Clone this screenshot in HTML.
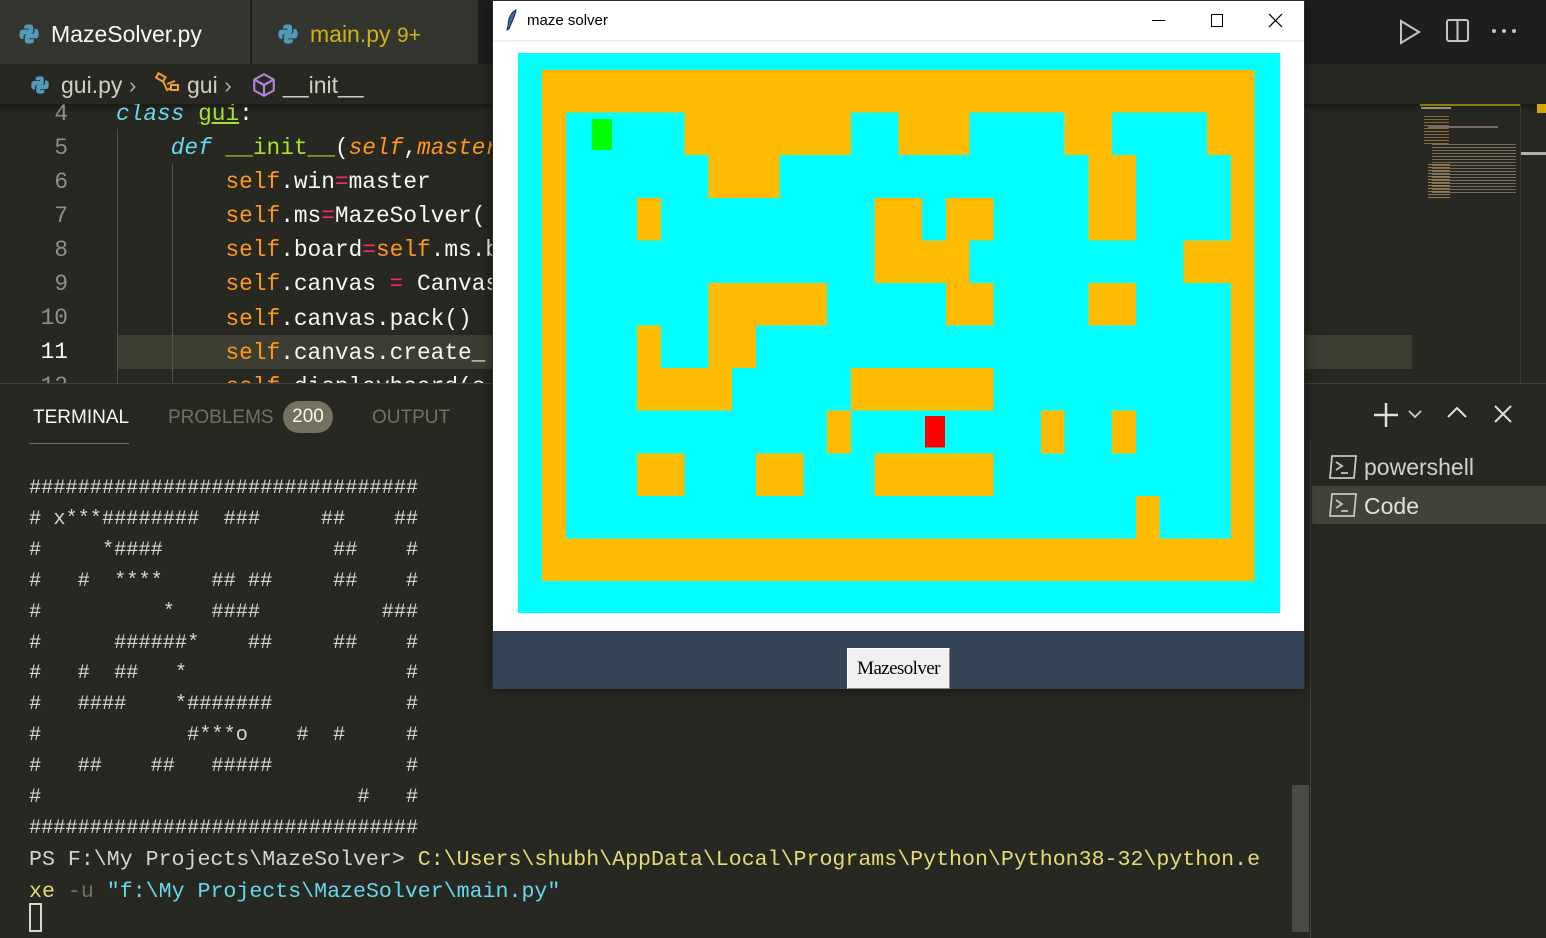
<!DOCTYPE html>
<html><head><meta charset="utf-8">
<style>
*{margin:0;padding:0;box-sizing:border-box}
body{width:1546px;height:938px;overflow:hidden;background:#272822;position:relative;font-family:"Liberation Sans",sans-serif}
.abs{position:absolute}
.mono{font-family:"Liberation Mono",monospace}
.code{position:absolute;left:116px;font-size:22.8px;line-height:34.1px;white-space:pre;color:#f8f8f2}
.ln{position:absolute;width:68px;text-align:right;font-size:22.8px;line-height:34px;color:#90908a}
.k{color:#66d9ef;font-style:italic}.g{color:#a6e22e}.o{color:#fd971f}.oi{color:#fd971f;font-style:italic}.p{color:#f92672}
.term{position:absolute;left:29px;top:474px;font-size:20.27px;line-height:30.9px;white-space:pre;color:#d6d6d0}
.ps{font-size:21.6px;line-height:30.9px}
</style></head><body>
<!-- tab bar -->
<div class="abs" style="left:0;top:0;width:1546px;height:64px;background:#1e1f1c"></div>
<div class="abs" style="left:0;top:0;width:250px;height:64px;background:#34352f"></div>
<div class="abs" style="left:252px;top:0;width:226px;height:64px;background:#34352f"></div>
<svg class="abs" style="left:18px;top:23px" width="22" height="22" viewBox="0 0 16 16"><path d="M7.9 1C4.3 1 4.5 2.6 4.5 2.6v1.6h3.5v.6H3.1S1 4.6 1 8.2s1.9 3.4 1.9 3.4H4V9.9s0-1.9 1.9-1.9h3.3s1.8 0 1.8-1.8V3S11.3 1 7.9 1z" fill="#519aba"/><path d="M8.1 15c3.6 0 3.4-1.6 3.4-1.6v-1.6H8v-.6h4.9S15 11.4 15 7.8s-1.9-3.4-1.9-3.4H12v1.7s0 1.9-1.9 1.9H6.8S5 8 5 9.8V13s-.3 2 3.1 2z" fill="#519aba"/></svg>
<div class="abs" style="left:51px;top:21px;font-size:23px;color:#f8f8f2">MazeSolver.py</div>
<svg class="abs" style="left:277px;top:23px" width="22" height="22" viewBox="0 0 16 16"><path d="M7.9 1C4.3 1 4.5 2.6 4.5 2.6v1.6h3.5v.6H3.1S1 4.6 1 8.2s1.9 3.4 1.9 3.4H4V9.9s0-1.9 1.9-1.9h3.3s1.8 0 1.8-1.8V3S11.3 1 7.9 1z" fill="#519aba"/><path d="M8.1 15c3.6 0 3.4-1.6 3.4-1.6v-1.6H8v-.6h4.9S15 11.4 15 7.8s-1.9-3.4-1.9-3.4H12v1.7s0 1.9-1.9 1.9H6.8S5 8 5 9.8V13s-.3 2 3.1 2z" fill="#519aba"/></svg>
<div class="abs" style="left:310px;top:21px;font-size:23px;color:#cfb01f">main.py <span style="font-size:21px">9+</span></div>
<!-- top right icons -->
<svg class="abs" style="left:1398px;top:19px" width="24" height="26"><path d="M3 2 L21 13 L3 24 Z" fill="none" stroke="#c5c5c5" stroke-width="2"/></svg>
<svg class="abs" style="left:1445px;top:18px" width="26" height="26"><rect x="2" y="2" width="21" height="21" rx="2" fill="none" stroke="#c5c5c5" stroke-width="2"/><line x1="12.5" y1="2" x2="12.5" y2="23" stroke="#c5c5c5" stroke-width="2"/></svg>
<svg class="abs" style="left:1490px;top:27px" width="28" height="8"><circle cx="4" cy="4" r="2" fill="#c5c5c5"/><circle cx="14" cy="4" r="2" fill="#c5c5c5"/><circle cx="24" cy="4" r="2" fill="#c5c5c5"/></svg>
<!-- breadcrumb -->
<div class="abs" style="left:0;top:64px;width:1546px;height:40px;background:#272822"></div>
<svg class="abs" style="left:30px;top:75px" width="20" height="20" viewBox="0 0 16 16"><path d="M7.9 1C4.3 1 4.5 2.6 4.5 2.6v1.6h3.5v.6H3.1S1 4.6 1 8.2s1.9 3.4 1.9 3.4H4V9.9s0-1.9 1.9-1.9h3.3s1.8 0 1.8-1.8V3S11.3 1 7.9 1z" fill="#519aba"/><path d="M8.1 15c3.6 0 3.4-1.6 3.4-1.6v-1.6H8v-.6h4.9S15 11.4 15 7.8s-1.9-3.4-1.9-3.4H12v1.7s0 1.9-1.9 1.9H6.8S5 8 5 9.8V13s-.3 2 3.1 2z" fill="#519aba"/></svg>
<div class="abs" style="left:61px;top:72px;font-size:23px;color:#cfcfc2;white-space:pre">gui.py <span style="color:#aaa">›</span></div>
<svg class="abs" style="left:155px;top:72px" width="28" height="26"><g fill="none" stroke="#ee9d28" stroke-width="2"><rect x="2" y="3" width="8" height="5" transform="rotate(30 6 5)"/><rect x="16" y="13" width="7" height="5"/><path d="M8 9 L12 18 L16 16"/><path d="M12 12 L20 9"/></g></svg>
<div class="abs" style="left:187px;top:72px;font-size:23px;color:#cfcfc2;white-space:pre">gui <span style="color:#aaa">›</span></div>
<svg class="abs" style="left:251px;top:72px" width="26" height="26" viewBox="0 0 24 24"><path d="M12 2 L21 7 L21 17 L12 22 L3 17 L3 7 Z M3 7 L12 12 L21 7 M12 12 L12 22" fill="none" stroke="#b180d7" stroke-width="2" stroke-linejoin="round"/></svg>
<div class="abs" style="left:283px;top:72px;font-size:23px;color:#cfcfc2">__init__</div>
<!-- editor -->
<div class="abs" style="left:0;top:104px;width:1546px;height:279px;overflow:hidden">
 <div class="abs" style="left:0;top:0;width:1546px;height:8px;background:linear-gradient(#1a1a17,rgba(39,40,34,0))"></div>
 <div class="abs" style="left:117px;top:231px;width:1295px;height:34px;background:#3e3d32"></div>
 <div class="abs" style="left:117px;top:25px;width:1px;height:260px;background:#525349"></div>
 <div class="abs" style="left:172px;top:60px;width:1px;height:230px;background:#525349"></div>
 <div class="ln mono" style="top:-7px">4</div>
 <div class="ln mono" style="top:27px">5</div>
 <div class="ln mono" style="top:61px">6</div>
 <div class="ln mono" style="top:95px">7</div>
 <div class="ln mono" style="top:129px">8</div>
 <div class="ln mono" style="top:163px">9</div>
 <div class="ln mono" style="top:197px">10</div>
 <div class="ln mono" style="top:231px;color:#f8f8f2">11</div>
 <div class="ln mono" style="top:265px">12</div>
 <div class="code mono" style="top:-7px"><span class="k">class</span> <span class="g" style="text-decoration:underline">gui</span>:
    <span class="k">def</span> <span class="g">__init__</span>(<span class="oi">self</span>,<span class="oi">master</span>):
        <span class="o">self</span>.win<span class="p">=</span>master
        <span class="o">self</span>.ms<span class="p">=</span>MazeSolver(
        <span class="o">self</span>.board<span class="p">=</span><span class="o">self</span>.ms.board
        <span class="o">self</span>.canvas <span class="p">=</span> Canvas(
        <span class="o">self</span>.canvas.pack()
        <span class="o">self</span>.canvas.create_
        <span class="o">self</span>.displayboard(s</div>
 <!-- minimap -->
 <div class="abs" style="left:1420px;top:0;width:100px;height:2px;background:#8a7a10"></div>
 <div class="abs" style="left:1421px;top:3px;width:30px;height:2px;background:#a09070"></div>
 <div class="abs" style="left:1424px;top:12px;width:25px;height:30px;background:repeating-linear-gradient(#8a6a3a 0 1px,transparent 1px 3px)"></div>
 <div class="abs" style="left:1428px;top:22px;width:70px;height:2px;background:#7a6a6a"></div>
 <div class="abs" style="left:1432px;top:40px;width:84px;height:50px;background:repeating-linear-gradient(#7a6a5a 0 1px,transparent 1px 3px)"></div>
 <div class="abs" style="left:1428px;top:60px;width:22px;height:34px;background:repeating-linear-gradient(#9a7a4a 0 1px,transparent 1px 3px)"></div>
 <div class="abs" style="left:1520px;top:0;width:1px;height:279px;background:#3a3b35"></div>
 <div class="abs" style="left:1537px;top:0;width:9px;height:9px;background:#d4aa00"></div>
 <div class="abs" style="left:1521px;top:48px;width:25px;height:3px;background:#b0b0b0"></div>
</div>
<!-- panel -->
<div class="abs" style="left:0;top:383px;width:1546px;height:1px;background:#414339"></div>
<div class="abs" style="left:33px;top:407px;font-size:19px;color:#f8f8f2">TERMINAL</div>
<div class="abs" style="left:29px;top:443px;width:100px;height:1px;background:#75715e"></div>
<div class="abs" style="left:168px;top:407px;font-size:19px;color:#75715e">PROBLEMS</div>
<div class="abs" style="left:283px;top:401px;width:50px;height:32px;border-radius:16px;background:#75715e;color:#f8f8f2;font-size:19px;text-align:center;line-height:32px">200</div>
<div class="abs" style="left:372px;top:407px;font-size:19px;color:#75715e">OUTPUT</div>
<div class="term mono">################################
# x***########  ###     ##    ##
#     *####              ##    #
#   #  ****    ## ##     ##    #
#          *   ####          ###
#      ######*    ##     ##    #
#   #  ##   *                  #
#   ####    *#######           #
#            #***o    #  #     #
#   ##    ##   #####           #
#                          #   #
################################
<span class="ps">PS F:\My Projects\MazeSolver&gt; <span style="color:#e6db74">C:\Users\shubh\AppData\Local\Programs\Python\Python38-32\python.e</span></span>
<span class="ps"><span style="color:#e6db74">xe</span> <span style="color:#75715e">-u</span> <span style="color:#66d9ef">"f:\My Projects\MazeSolver\main.py"</span></span></div>
<div class="abs" style="left:29px;top:903px;width:13px;height:29px;border:2px solid #d6d6d0"></div>
<div class="abs" style="left:1292px;top:785px;width:17px;height:147px;background:#4a4a45"></div>
<!-- right terminal list -->
<div class="abs" style="left:1310px;top:440px;width:1px;height:498px;background:#414339"></div>
<svg class="abs" style="left:1372px;top:401px" width="28" height="28"><path d="M14 2V26M2 14H26" stroke="#e0e0e0" stroke-width="2.5"/></svg>
<svg class="abs" style="left:1407px;top:408px" width="16" height="12"><path d="M2 3L8 9L14 3" fill="none" stroke="#ccc" stroke-width="1.8"/></svg>
<svg class="abs" style="left:1446px;top:405px" width="22" height="14"><path d="M2 12L11 3L20 12" fill="none" stroke="#ddd" stroke-width="2"/></svg>
<svg class="abs" style="left:1493px;top:404px" width="20" height="20"><path d="M2 2L18 18M18 2L2 18" stroke="#ddd" stroke-width="2"/></svg>
<div class="abs" style="left:1312px;top:486px;width:234px;height:38px;background:#414339"></div>
<svg class="abs" style="left:1328px;top:454px" width="30" height="26"><path d="M4 2H28L26 24H2Z" fill="none" stroke="#c5c5c5" stroke-width="1.8"/><path d="M8 8L14 12L8 16M13 19H20" fill="none" stroke="#c5c5c5" stroke-width="1.8"/></svg>
<div class="abs" style="left:1364px;top:454px;font-size:23px;color:#d0d0d0">powershell</div>
<svg class="abs" style="left:1328px;top:492px" width="30" height="26"><path d="M4 2H28L26 24H2Z" fill="none" stroke="#c5c5c5" stroke-width="1.8"/><path d="M8 8L14 12L8 16M13 19H20" fill="none" stroke="#c5c5c5" stroke-width="1.8"/></svg>
<div class="abs" style="left:1364px;top:493px;font-size:23px;color:#e0e0e0">Code</div>
<!-- Tk window -->
<div class="abs" style="left:492px;top:0;width:813px;height:689px;background:#fff;border:1px solid #2b2b2b;box-shadow:0 0 12px rgba(0,0,0,.5)">
 <svg class="abs" style="left:12px;top:8px" width="14" height="22"><path d="M11 1C6 3 3 10 3 17L2 21L4 20C6 14 10 8 11 1Z" fill="#3a6aa8" stroke="#1a2a44" stroke-width="1"/></svg>
 <div class="abs" style="left:34px;top:11px;font-size:15px;color:#000">maze solver</div>
 <div class="abs" style="left:659px;top:19px;width:13px;height:1px;background:#000"></div>
 <div class="abs" style="left:718px;top:13px;width:12px;height:13px;border:1px solid #000"></div>
 <svg class="abs" style="left:775px;top:12px" width="15" height="15"><path d="M1 1L14 14M14 1L1 14" stroke="#000" stroke-width="1.2"/></svg>
 <div class="abs" style="left:0;top:39px;width:811px;height:2px;background:#f0f0f0"></div>
 <div class="abs" style="left:0;top:630px;width:811px;height:58px;background:#344456"></div>
 <div class="abs" style="left:354px;top:647px;width:103px;height:41px;background:#f0f0f0;border:1px solid #fff;border-right-color:#888;border-bottom-color:#888;font-family:'Liberation Serif',serif;font-size:19px;letter-spacing:-0.6px;color:#000;text-align:center;line-height:40px">Mazesolver</div>
</div>
<div class="abs" style="left:518px;top:53px;width:762px;height:560px;background:#00ffff"></div>
<svg class="abs" style="left:542px;top:70px" width="712.5" height="511" viewBox="0 0 30 12" preserveAspectRatio="none" shape-rendering="crispEdges">
<rect x="0" y="0" width="30" height="12" fill="#ffbb00"/>
<rect x="1" y="1" width="28" height="10" fill="#00ffff"/>
<g fill="#ffbb00">
<rect x="6" y="1" width="7" height="1"/><rect x="15" y="1" width="3" height="1"/><rect x="22" y="1" width="2" height="1"/><rect x="28" y="1" width="1" height="1"/>
<rect x="7" y="2" width="3" height="1"/><rect x="23" y="2" width="2" height="1"/>
<rect x="4" y="3" width="1" height="1"/><rect x="14" y="3" width="2" height="1"/><rect x="17" y="3" width="2" height="1"/><rect x="23" y="3" width="2" height="1"/>
<rect x="14" y="4" width="4" height="1"/><rect x="27" y="4" width="2" height="1"/>
<rect x="7" y="5" width="5" height="1"/><rect x="17" y="5" width="2" height="1"/><rect x="23" y="5" width="2" height="1"/>
<rect x="4" y="6" width="1" height="1"/><rect x="7" y="6" width="2" height="1"/>
<rect x="4" y="7" width="4" height="1"/><rect x="13" y="7" width="6" height="1"/>
<rect x="12" y="8" width="1" height="1"/><rect x="21" y="8" width="1" height="1"/><rect x="24" y="8" width="1" height="1"/>
<rect x="4" y="9" width="2" height="1"/><rect x="9" y="9" width="2" height="1"/><rect x="14" y="9" width="5" height="1"/>
<rect x="25" y="10" width="1" height="1"/>
</g>
<rect x="2.105" y="1.15" width="0.84" height="0.73" fill="#00ff00"/>
<rect x="16.13" y="8.13" width="0.84" height="0.73" fill="#ff0000"/>
</svg>
</body></html>
